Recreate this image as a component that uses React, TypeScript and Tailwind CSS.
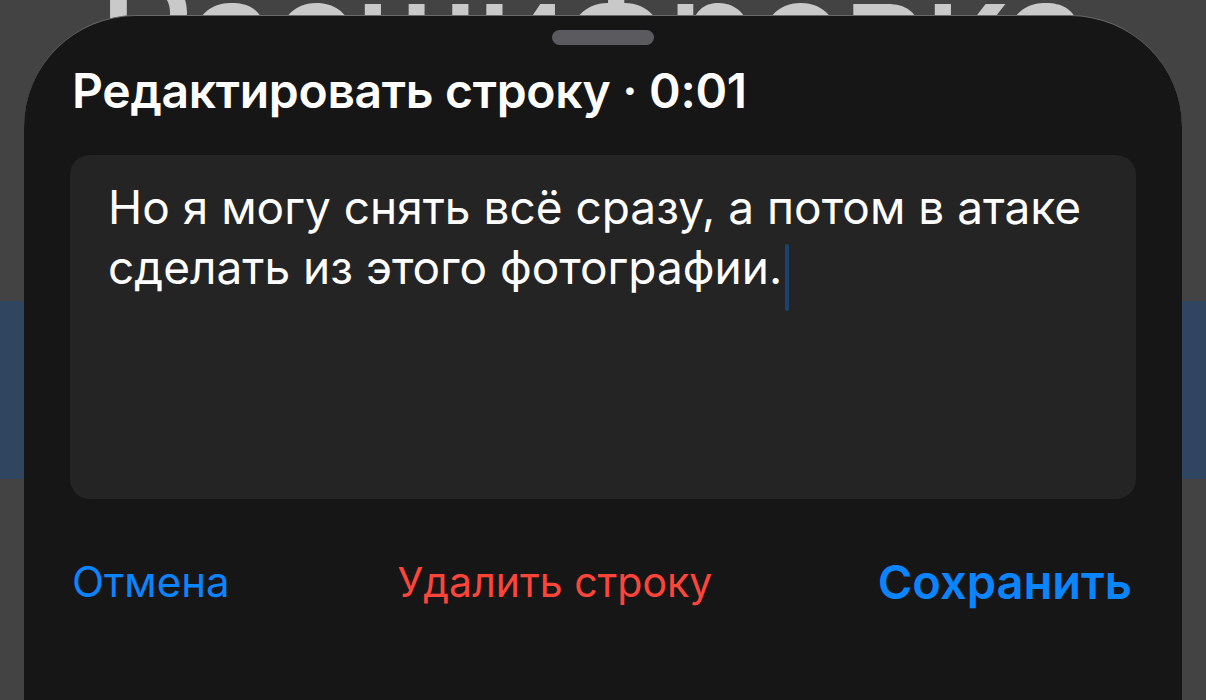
export default function App() {
  return (
    <div className="relative h-[700px] w-[1206px] overflow-hidden bg-[#434343] font-['Inter',sans-serif]">
      {/* Page behind the sheet */}
      <div className="flex flex-col">
        <h1 className="-mt-[43px] h-[150px] pl-[98px] text-[150px] font-medium leading-[150px] tracking-tight text-[#c9c9c9]">
          Расшифровка
        </h1>
        <div className="mt-[194px] h-[178px] bg-[#2f4560]" />
      </div>

      {/* Edit sheet */}
      <div className="absolute bottom-0 left-[24px] right-[24px] top-[15px] flex flex-col rounded-t-[112px] border-t border-[#6a6a6a] bg-[#161616]">
        <div className="mx-auto mt-[14px] h-[15px] w-[102px] rounded-full bg-[#5b5b5f]" />

        <h2 className="mt-[16px] pl-[48px] text-[48px] font-semibold leading-[60px] tracking-[-0.3px] text-white">
          Редактировать строку · 0:01
        </h2>

        <div className="mx-[46px] mt-[34px] h-[344px] rounded-[20px] bg-[#242424] px-[38px] pt-[22px]">
          <p className="text-[46px] leading-[60px] text-white">
            Но я могу снять всё сразу, а потом в атаке
            <br />
            сделать из этого фотографии.
            <span className="relative inline-block w-[8px]">
              <span className="absolute -top-[40px] left-[3px] h-[67px] w-[4px] rounded-full bg-[#1d4270]" />
            </span>
          </p>
        </div>

        <div className="mt-[55px] flex items-center pl-[48px] pr-[50px]">
          <button className="text-[42px] leading-[56px] text-[#0a84ff]">Отмена</button>
          <button className="ml-[168px] text-[41px] leading-[56px] text-[#ff453a]">Удалить строку</button>
          <button className="ml-auto text-[47px] font-semibold leading-[56px] text-[#0a84ff]">Сохранить</button>
        </div>
      </div>
    </div>
  );
}
